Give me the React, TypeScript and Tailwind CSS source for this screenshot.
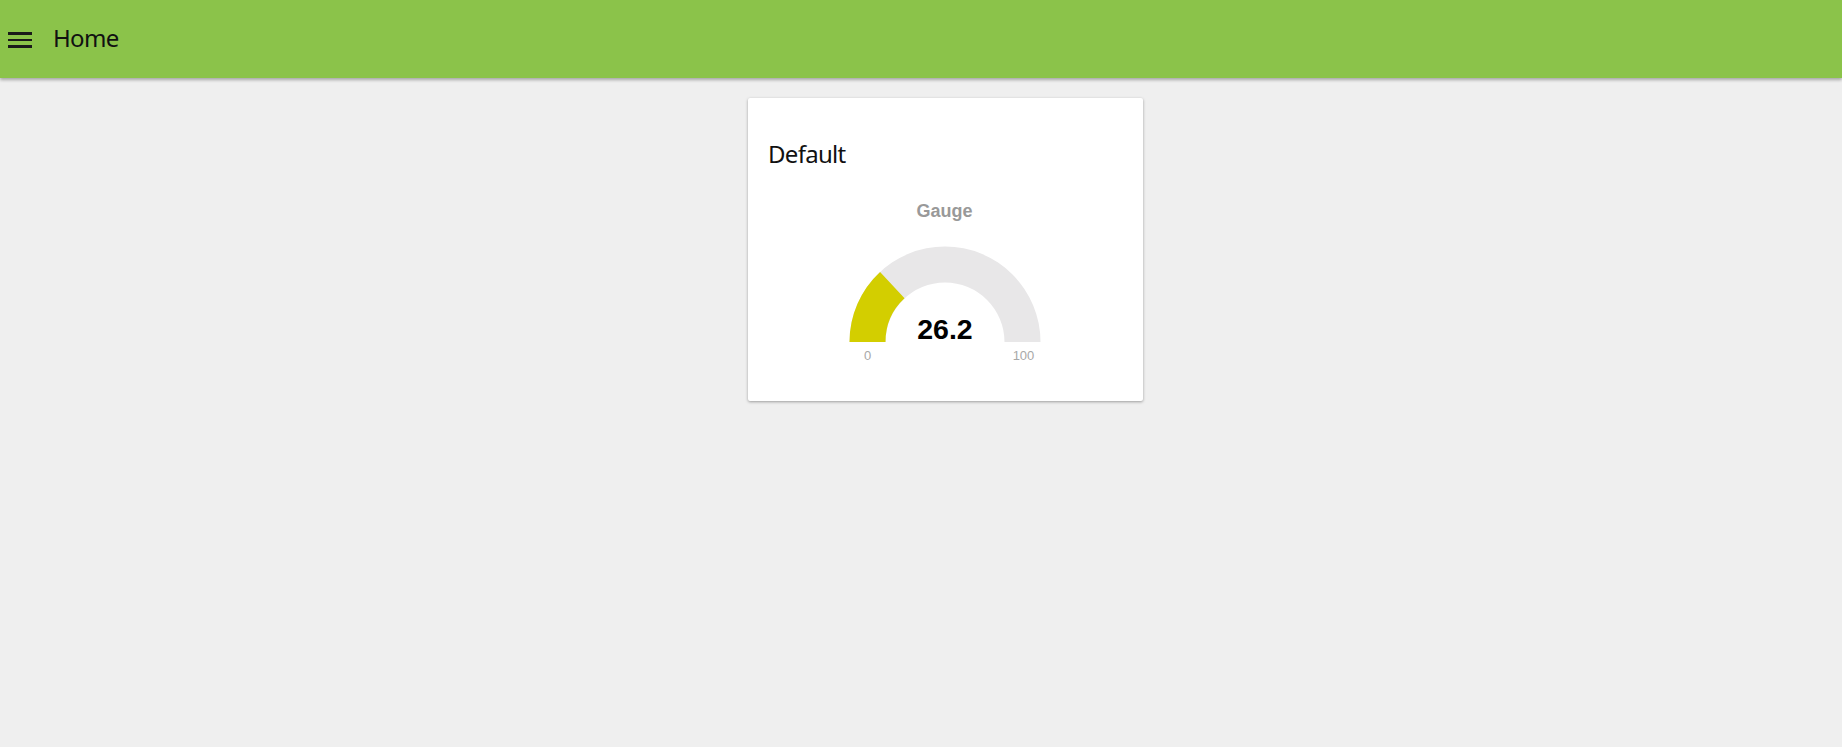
import React, { FC } from "react";

const Gauge: FC<{ value: number; min: number; max: number }> = ({
  value,
  min,
  max,
}) => {
  const cx = 100;
  const cy = 100;
  const ro = 95.5;
  const ri = 59.5;
  const a = Math.PI - ((value - min) / (max - min)) * Math.PI;
  const ox = cx + ro * Math.cos(a);
  const oy = cy - ro * Math.sin(a);
  const ix = cx + ri * Math.cos(a);
  const iy = cy - ri * Math.sin(a);
  return (
    <svg width="200" height="124" viewBox="0 0 200 124">
      <path
        d={`M${cx - ro} ${cy} A${ro} ${ro} 0 0 1 ${cx + ro} ${cy} L${cx + ri} ${cy} A${ri} ${ri} 0 0 0 ${cx - ri} ${cy} Z`}
        fill="#e8e7e8"
      />
      <path
        d={`M${cx - ro} ${cy} A${ro} ${ro} 0 0 1 ${ox} ${oy} L${ix} ${iy} A${ri} ${ri} 0 0 0 ${cx - ri} ${cy} Z`}
        fill="#d3ce00"
      />
      <text
        x={cx}
        y={96.5}
        textAnchor="middle"
        fontFamily="'Liberation Sans', Arial, sans-serif"
        fontWeight="bold"
        fontSize="28.5"
        fill="#010101"
      >
        {value}
      </text>
      <text
        x={22.5}
        y={118}
        textAnchor="middle"
        fontFamily="'Liberation Sans', Arial, sans-serif"
        fontSize="13"
        fill="#a8a8a8"
      >
        {min}
      </text>
      <text
        x={178.5}
        y={118}
        textAnchor="middle"
        fontFamily="'Liberation Sans', Arial, sans-serif"
        fontSize="13"
        fill="#a8a8a8"
      >
        {max}
      </text>
    </svg>
  );
};

const App: FC = () => {
  return (
    <div className="min-h-[747px] bg-[#efefef] font-['Noto_Sans',sans-serif]">
      {/* Toolbar */}
      <div className="h-[78px] bg-[#8bc34a] flex items-center shadow-[0_2px_3px_rgba(0,0,0,0.3)] relative z-10">
        <div className="ml-2 w-6 flex flex-col gap-1 pt-[2px]">
          <span className="block h-[2.5px] bg-[#1a1a1a]" />
          <span className="block h-[2.5px] bg-[#1a1a1a]" />
          <span className="block h-[2.5px] bg-[#1a1a1a]" />
        </div>
        <div className="ml-[21px] mb-[2px] text-[24px] tracking-[-0.7px] text-[#111] leading-none">
          Home
        </div>
      </div>

      {/* Group */}
      <div className="pt-5 pl-[748px]">
        <div className="w-[395px] h-[303px] bg-white rounded-[2px] shadow-[0_1px_3px_rgba(0,0,0,0.35)] flex flex-col">
          <div className="pl-5 pt-[44px] text-[24px] leading-none tracking-[-0.7px] text-[#111]">
            Default
          </div>
          <div className="mt-[36px] flex flex-col items-center pr-[2px]">
            <div className="font-['Liberation_Sans',Arial,sans-serif] font-bold text-[18px] leading-none text-[#999999]">
              Gauge
            </div>
            <div className="mt-[22px]">
              <Gauge value={26.2} min={0} max={100} />
            </div>
          </div>
        </div>
      </div>
    </div>
  );
};

export default App;
